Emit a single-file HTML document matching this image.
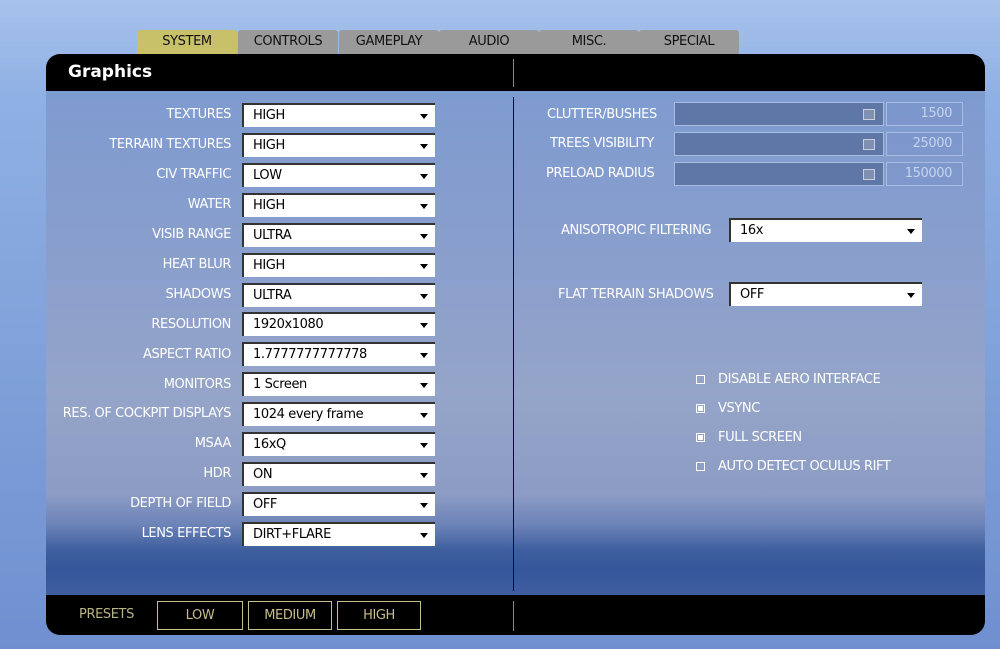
<!DOCTYPE html>
<html><head><style>
*{margin:0;padding:0;box-sizing:border-box}
body{width:1000px;height:649px;overflow:hidden;position:relative;font-family:"DejaVu Sans","Liberation Sans",sans-serif;letter-spacing:-0.4px;
background:linear-gradient(180deg,#a7c2ec 0%,#8fb0e4 15%,#7e9fd8 60%,#6f8fd0 100%);}
.tab{position:absolute;top:30px;height:24px;width:100px;background:#9a9a9a;color:#111;font-size:13px;text-align:center;line-height:24px;border-radius:3px 3px 0 0}
.hdr{position:absolute;left:46px;top:54px;width:939px;height:37px;background:#000;border-radius:14px 14px 0 0}
.body{position:absolute;left:46px;top:91px;width:939px;height:504px;
background:linear-gradient(180deg,#7e9bd0 0%,#8a9fcc 35%,#95a4c8 60%,#8c9cc4 80%,#6d84b8 86%,#3f5f9f 91%,#34569a 95%,#3f5ea0 100%)}
.ftr{position:absolute;left:46px;top:595px;width:939px;height:40px;background:#000;border-radius:0 0 14px 14px}
.lbl{position:absolute;color:#fff;font-size:13px;text-align:right;width:220px;left:11px}
.dd{position:absolute;left:242px;width:193px;height:24px;background:#fff;border-top:2px solid #333;border-left:2px solid #333;font-size:13px;color:#000;padding-left:9px;line-height:21px}
.dd:after{content:"";position:absolute;right:7px;top:9px;border-left:4px solid transparent;border-right:4px solid transparent;border-top:5px solid #000}
.sl{position:absolute;left:674px;width:210px;height:24px;background:#5f77a6;border:1px solid #a8bbe0}
.sl i{position:absolute;right:8px;top:6px;width:12px;height:11px;border:1px solid #ccd;background:#8090b0}
.sv{position:absolute;left:886px;width:77px;height:24px;border:1px solid #a8bbe0;color:#c8d4ee;font-size:13px;text-align:right;padding-right:10px;line-height:22px;background:rgba(120,145,200,.4)}
.rl{position:absolute;color:#fff;font-size:13px}
.cb{position:absolute;left:696px;width:9px;height:9px;border:1px solid #fff}
.cb.on:after{content:"";position:absolute;left:1px;top:1px;width:5px;height:5px;background:#fff}
.pb{position:absolute;top:601px;height:29px;border:1px solid #c8be8a;color:#c8be8a;font-size:13px;text-align:center;line-height:27px}
</style></head><body>
<div class="tab" style="left:137px;background:#c9c06a">SYSTEM</div>
<div class="tab" style="left:238px">CONTROLS</div>
<div class="tab" style="left:339px">GAMEPLAY</div>
<div class="tab" style="left:439px">AUDIO</div>
<div class="tab" style="left:539px">MISC.</div>
<div class="tab" style="left:639px">SPECIAL</div>
<div class="hdr"><div style="position:absolute;left:22px;top:8px;color:#fff;font-weight:bold;font-size:17px;letter-spacing:0">Graphics</div>
<div style="position:absolute;left:467px;top:5px;width:1px;height:28px;background:#888"></div></div>
<div class="body"><div style="position:absolute;left:467px;top:6px;width:1px;height:494px;background:#111"></div></div>
<div class="ftr"><div style="position:absolute;left:33px;top:12px;color:#b8b48a;font-size:13px">PRESETS</div>
<div style="position:absolute;left:467px;top:6px;width:1px;height:30px;background:#888"></div></div>
<div class="pb" style="left:157px;width:86px">LOW</div>
<div class="pb" style="left:248px;width:84px">MEDIUM</div>
<div class="pb" style="left:337px;width:84px">HIGH</div>

<div class="lbl" style="top:107px">TEXTURES</div><div class="dd" style="top:103px">HIGH</div>
<div class="lbl" style="top:137px">TERRAIN TEXTURES</div><div class="dd" style="top:133px">HIGH</div>
<div class="lbl" style="top:167px">CIV TRAFFIC</div><div class="dd" style="top:163px">LOW</div>
<div class="lbl" style="top:197px">WATER</div><div class="dd" style="top:193px">HIGH</div>
<div class="lbl" style="top:227px">VISIB RANGE</div><div class="dd" style="top:223px">ULTRA</div>
<div class="lbl" style="top:257px">HEAT BLUR</div><div class="dd" style="top:253px">HIGH</div>
<div class="lbl" style="top:287px">SHADOWS</div><div class="dd" style="top:283px">ULTRA</div>
<div class="lbl" style="top:317px">RESOLUTION</div><div class="dd" style="top:312px">1920x1080</div>
<div class="lbl" style="top:347px">ASPECT RATIO</div><div class="dd" style="top:342px">1.7777777777778</div>
<div class="lbl" style="top:377px">MONITORS</div><div class="dd" style="top:372px">1 Screen</div>
<div class="lbl" style="top:406px">RES. OF COCKPIT DISPLAYS</div><div class="dd" style="top:402px">1024 every frame</div>
<div class="lbl" style="top:436px">MSAA</div><div class="dd" style="top:432px">16xQ</div>
<div class="lbl" style="top:466px">HDR</div><div class="dd" style="top:462px">ON</div>
<div class="lbl" style="top:496px">DEPTH OF FIELD</div><div class="dd" style="top:492px">OFF</div>
<div class="lbl" style="top:526px">LENS EFFECTS</div><div class="dd" style="top:522px">DIRT+FLARE</div>

<div class="rl" style="left:547px;top:107px">CLUTTER/BUSHES</div><div class="sl" style="top:102px"><i></i></div><div class="sv" style="top:102px">1500</div>
<div class="rl" style="left:550px;top:136px">TREES VISIBILITY</div><div class="sl" style="top:132px"><i></i></div><div class="sv" style="top:132px">25000</div>
<div class="rl" style="left:546px;top:166px">PRELOAD RADIUS</div><div class="sl" style="top:162px"><i></i></div><div class="sv" style="top:162px">150000</div>
<div class="rl" style="left:561px;top:223px">ANISOTROPIC FILTERING</div><div class="dd" style="left:729px;top:218px">16x</div>
<div class="rl" style="left:558px;top:287px">FLAT TERRAIN SHADOWS</div><div class="dd" style="left:729px;top:282px">OFF</div>

<div class="cb" style="top:375px"></div><div class="rl" style="left:718px;top:372px">DISABLE AERO INTERFACE</div>
<div class="cb on" style="top:404px"></div><div class="rl" style="left:718px;top:401px">VSYNC</div>
<div class="cb on" style="top:433px"></div><div class="rl" style="left:718px;top:430px">FULL SCREEN</div>
<div class="cb" style="top:462px"></div><div class="rl" style="left:718px;top:459px">AUTO DETECT OCULUS RIFT</div>
</body></html>
